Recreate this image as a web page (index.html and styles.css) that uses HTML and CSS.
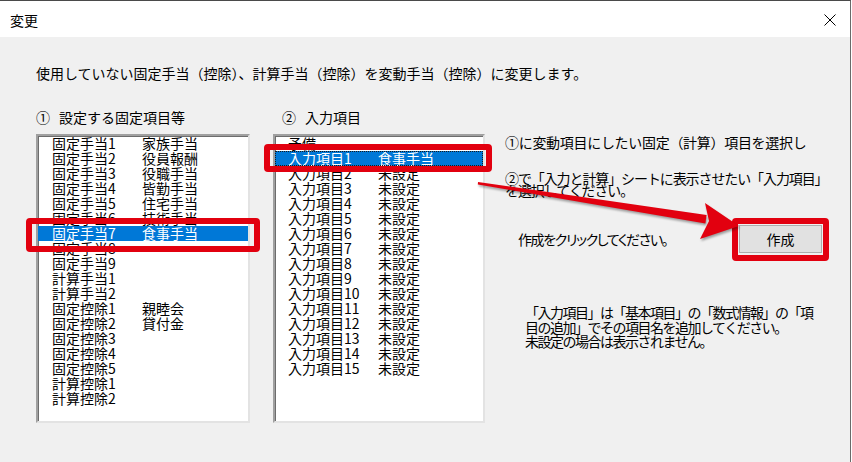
FILE: index.html
```html
<!DOCTYPE html>
<html lang="ja">
<head>
<meta charset="utf-8">
<title>変更</title>
<link rel="stylesheet" href="styles.css">
</head>
<body>
<div class="window">
  <div class="titlebar">
    <span class="title">変更</span>
    <svg class="close" width="12" height="12" viewBox="0 0 12 12"><path d="M0.5 0.5 L11.5 11.5 M11.5 0.5 L0.5 11.5" stroke="#000" stroke-width="1" fill="none"/></svg>
  </div>
  <div class="content">
    <p class="intro">使用していない固定手当（控除）、計算手当（控除）を変動手当（控除）に変更します。</p>
    <div class="main">
      <div class="col col-left">
        <div class="head"><span class="num">①</span>設定する固定項目等</div>
        <div class="listbox list-left">
          <div class="row"><span>固定手当1</span><span>家族手当</span></div>
          <div class="row"><span>固定手当2</span><span>役員報酬</span></div>
          <div class="row"><span>固定手当3</span><span>役職手当</span></div>
          <div class="row"><span>固定手当4</span><span>皆勤手当</span></div>
          <div class="row"><span>固定手当5</span><span>住宅手当</span></div>
          <div class="row"><span>固定手当6</span><span>技術手当</span></div>
          <div class="row sel"><span>固定手当7</span><span>食事手当</span></div>
          <div class="row"><span>固定手当8</span><span></span></div>
          <div class="row"><span>固定手当9</span><span></span></div>
          <div class="row"><span>計算手当1</span><span></span></div>
          <div class="row"><span>計算手当2</span><span></span></div>
          <div class="row"><span>固定控除1</span><span>親睦会</span></div>
          <div class="row"><span>固定控除2</span><span>貸付金</span></div>
          <div class="row"><span>固定控除3</span><span></span></div>
          <div class="row"><span>固定控除4</span><span></span></div>
          <div class="row"><span>固定控除5</span><span></span></div>
          <div class="row"><span>計算控除1</span><span></span></div>
          <div class="row"><span>計算控除2</span><span></span></div>
        </div>
      </div>
      <div class="col col-mid">
        <div class="head head-mid"><span class="num">②</span>入力項目</div>
        <div class="listbox list-mid">
          <div class="row"><span>予備</span><span></span></div>
          <div class="row sel focus"><span>入力項目1</span><span>食事手当</span></div>
          <div class="row"><span>入力項目2</span><span>未設定</span></div>
          <div class="row"><span>入力項目3</span><span>未設定</span></div>
          <div class="row"><span>入力項目4</span><span>未設定</span></div>
          <div class="row"><span>入力項目5</span><span>未設定</span></div>
          <div class="row"><span>入力項目6</span><span>未設定</span></div>
          <div class="row"><span>入力項目7</span><span>未設定</span></div>
          <div class="row"><span>入力項目8</span><span>未設定</span></div>
          <div class="row"><span>入力項目9</span><span>未設定</span></div>
          <div class="row"><span>入力項目10</span><span>未設定</span></div>
          <div class="row"><span>入力項目11</span><span>未設定</span></div>
          <div class="row"><span>入力項目12</span><span>未設定</span></div>
          <div class="row"><span>入力項目13</span><span>未設定</span></div>
          <div class="row"><span>入力項目14</span><span>未設定</span></div>
          <div class="row"><span>入力項目15</span><span>未設定</span></div>
        </div>
      </div>
      <div class="col col-right">
        <p class="note1">①に変動項目にしたい固定（計算）項目を選択し</p>
        <p class="note2">②で「入力と計算」シートに表示させたい「入力項目」<br>を選択してください。</p>
        <div class="action">
          <span class="action-text">作成をクリックしてください。</span>
          <button class="btn">作成</button>
        </div>
        <p class="note3">「入力項目」は「基本項目」の「数式情報」の「項<br>目の追加」でその項目名を追加してください。<br>未設定の場合は表示されません。</p>
      </div>
    </div>
  </div>

  <div class="mark mark-left"></div>
  <div class="mark mark-mid"></div>
  <div class="mark mark-btn"></div>
  <svg class="arrow" width="852" height="462" viewBox="0 0 852 462">
    <polygon points="478,182 477.8,184.5 705.4,223.5 706.6,215" fill="#e2000f"/>
    <polygon points="739,226 705,203 709,221 700,239" fill="#e2000f"/>
  </svg>
</div>
</body>
</html>
```

FILE: styles.css
```css
html, body {
  margin: 0;
  padding: 0;
  background: #ffffff;
}

.window {
  position: relative;
  width: 850px;
  height: 461px;
  border-top: 1px solid #4a4a4a;
  border-right: 1px solid #6a6a6a;
  background: #f0f0f0;
  font-family: "Noto Sans CJK JP", "Noto Sans", sans-serif;
  color: #000;
  overflow: hidden;
}

.titlebar {
  height: 36px;
  background: #ffffff;
  display: flex;
  align-items: center;
  justify-content: space-between;
  padding: 0 14px 0 10px;
}

.title {
  font-size: 14px;
  line-height: 16px;
  margin-top: 2px;
}

.close {
  display: block;
  margin-top: 2px;
}

.content {
  padding: 26px 0 0 36px;
}

.intro {
  margin: 0;
  font-size: 14px;
  line-height: 20px;
  height: 20px;
  white-space: nowrap;
}

.main {
  display: flex;
  margin-top: 26px;
}

.col {
  display: flex;
  flex-direction: column;
}

.col-mid {
  margin-left: 23px;
}

.col-right {
  margin-left: 20px;
  width: 317px;
}

.head {
  font-size: 14px;
  line-height: 16px;
  height: 16px;
  white-space: nowrap;
}

.num {
  margin-right: 9px;
}

.head-mid {
  margin-left: 9px;
}

.listbox {
  margin-top: 9px;
  box-sizing: border-box;
  height: 289px;
  background: #ffffff;
  border: 2px solid;
  border-color: #a0a0a0 #e3e3e3 #e3e3e3 #a0a0a0;
  box-shadow: inset 1px 1px 0 #6d6d6d;
  font-size: 14px;
  line-height: 15px;
  overflow: hidden;
}

.list-left {
  width: 214px;
}

.list-mid {
  width: 212px;
}

.row {
  display: grid;
  grid-template-columns: 90px auto;
  height: 15px;
  padding-left: 14px;
  white-space: nowrap;
}

.list-mid .row {
  padding-left: 13px;
}

.row.sel {
  background: #0078d7;
  color: #ffffff;
}

.row.focus {
  outline: 1px dotted #1a1a1a;
  outline-offset: -1px;
}

.col-right p {
  margin: 0;
  font-size: 14px;
  white-space: nowrap;
}

.note1 {
  margin-top: 25px !important;
  line-height: 16px;
  letter-spacing: -0.3px;
}

.note2 {
  margin-top: 22px !important;
  line-height: 12px;
  letter-spacing: -1.1px;
}

.action {
  display: flex;
  align-items: center;
  margin-top: 29px;
  height: 28px;
}

.action-text {
  font-size: 14px;
  line-height: 16px;
  margin-left: 13px;
  white-space: nowrap;
  font-feature-settings: "palt";
  letter-spacing: -1.4px;
}

.btn {
  margin-left: auto;
  width: 83px;
  height: 28px;
  background: #e1e1e1;
  border: 1px solid #adadad;
  font-family: "Noto Sans CJK JP", sans-serif;
  font-size: 14px;
  padding: 0;
  color: #000;
}

.note3 {
  margin-top: 52px !important;
  margin-left: 20px !important;
  line-height: 14.5px;
  letter-spacing: -1.5px;
}

.mark {
  position: absolute;
  box-sizing: border-box;
  border: 6px solid #e2000f;
  border-radius: 4px;
}

.mark-left {
  left: 26px;
  top: 217px;
  width: 234px;
  height: 34px;
}

.mark-mid {
  left: 264px;
  top: 143px;
  width: 228px;
  height: 28px;
}

.mark-btn {
  left: 732px;
  top: 217px;
  width: 97px;
  height: 43px;
}

.arrow {
  position: absolute;
  left: 0;
  top: -1px;
  pointer-events: none;
  filter: drop-shadow(1px 2px 1px rgba(0, 0, 0, 0.35));
}
```
